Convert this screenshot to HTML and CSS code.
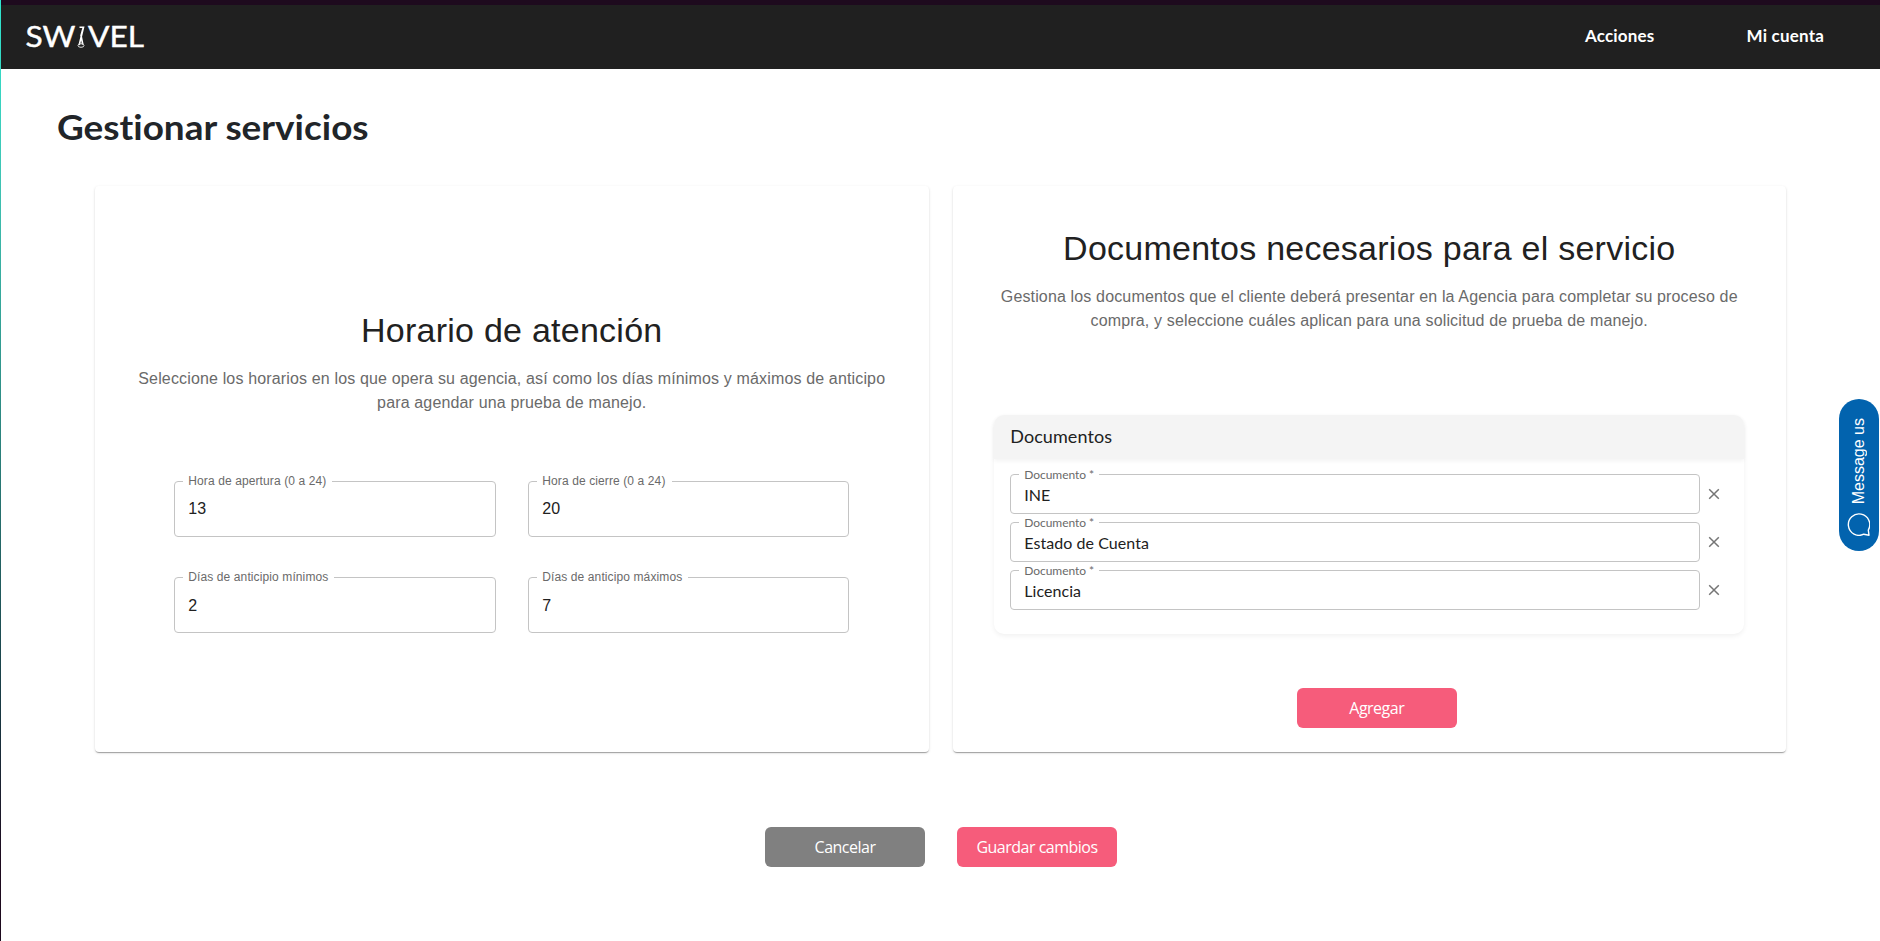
FILE: index.html
```html
<!DOCTYPE html>
<html lang="es">
<head>
<meta charset="utf-8">
<title>Gestionar servicios</title>
<link rel="stylesheet" href="styles.css">
</head>
<body>
<div class="edge"></div>
<header class="topbar">
  <svg class="logo" width="130" height="40" viewBox="0 0 130 40" role="img" aria-label="Swivel">
    <text class="logo-text" x="0.500" y="30" textLength="50" lengthAdjust="spacingAndGlyphs">SW</text>
    <path class="logo-stroke" d="M54.500 10.200h4L54.200 28M58.300 10.500L56 18.500L57.800 27.500"/>
    <ellipse class="logo-base" cx="56" cy="28.500" rx="3" ry="1.800"/>
    <text class="logo-text" x="63" y="30" textLength="56" lengthAdjust="spacingAndGlyphs">VEL</text>
  </svg>
  <nav class="nav"><a class="nav-link">Acciones</a><a class="nav-link">Mi cuenta</a></nav>
</header>
<main class="page">
  <h1 class="title">Gestionar servicios</h1>
  <div class="cards">
    <section class="card hours">
      <h2 class="card-title">Horario de atención</h2>
      <p class="card-text">Seleccione los horarios en los que opera su agencia, así como los días mínimos y máximos de anticipo<br>para agendar una prueba de manejo.</p>
      <div class="fields">
        <label class="field"><span class="label">Hora de apertura (0 a 24)</span><span class="value">13</span></label>
        <label class="field"><span class="label">Hora de cierre (0 a 24)</span><span class="value">20</span></label>
        <label class="field low"><span class="label">Días de anticipio mínimos</span><span class="value">2</span></label>
        <label class="field low"><span class="label">Días de anticipo máximos</span><span class="value">7</span></label>
      </div>
    </section>
    <section class="card docs">
      <h2 class="card-title">Documentos necesarios para el servicio</h2>
      <p class="card-text">Gestiona los documentos que el cliente deberá presentar en la Agencia para completar su proceso de<br>compra, y seleccione cuáles aplican para una solicitud de prueba de manejo.</p>
      <div class="panel">
        <h3 class="panel-head">Documentos</h3>
        <div class="panel-body">
          <div class="doc-row"><label class="field doc"><span class="label">Documento *</span><span class="value">INE</span></label><svg class="remove" viewBox="0 0 12 12"><path d="M1.200 1.200L10.800 10.800M10.800 1.200L1.200 10.800"/></svg></div>
          <div class="doc-row"><label class="field doc"><span class="label">Documento *</span><span class="value">Estado de Cuenta</span></label><svg class="remove" viewBox="0 0 12 12"><path d="M1.200 1.200L10.800 10.800M10.800 1.200L1.200 10.800"/></svg></div>
          <div class="doc-row"><label class="field doc"><span class="label">Documento *</span><span class="value">Licencia</span></label><svg class="remove" viewBox="0 0 12 12"><path d="M1.200 1.200L10.800 10.800M10.800 1.200L1.200 10.800"/></svg></div>
        </div>
      </div>
      <button class="btn primary">Agregar</button>
    </section>
  </div>
  <div class="actions">
    <button class="btn neutral">Cancelar</button>
    <button class="btn primary">Guardar cambios</button>
  </div>
</main>
<aside class="chat">
  <span class="chat-text">Message us</span>
  <svg class="chat-icon" viewBox="0 0 24 24"><path d="M23 23.200L22.300 18A10.700 10.700 0 1 0 17.800 22.200L23 23.200Z"/></svg>
</aside>
</body>
</html>
```

FILE: styles.css
```css
* { box-sizing: border-box; }
body {
  margin: 0;
  min-height: 941px;
  background: #fff;
  color: #212121;
  font-family: "Liberation Sans", Arial, sans-serif;
  overflow: hidden;
}
.edge {
  position: absolute;
  left: 0;
  top: 0;
  width: 1px;
  height: 941px;
  background: linear-gradient(#2fe6cf 0, #3fc4b4 180px, #34a397 320px, #266e6c 520px, #183540 720px, #1d0a1e 860px, #1d0a1e);
}
.topbar {
  display: flex;
  align-items: center;
  justify-content: space-between;
  height: 69px;
  padding: 0 56px 0 25px;
  border-top: 5px solid #1e0a1e;
  background: #202020;
}
.logo { display: block; }
.logo-text { fill: #fff; stroke: #fff; stroke-width: .4; font: 400 29px Lato, sans-serif; }
.logo-stroke { fill: none; stroke: #fff; stroke-width: 1.600; }
.logo-base { fill: none; stroke: #ddd; stroke-width: 1; }
.nav { display: flex; gap: 92px; padding-bottom: 2px; }
.nav-link { color: #fff; font: 700 17px/24px Lato, sans-serif; letter-spacing: .2px; }
.title {
  margin: 0 0 0 57px;
  padding: 39px 0 0;
  width: 300px;
  height: 117px;
  color: #212529;
  font: 700 34px/38px Lato, sans-serif;
  font-variant-ligatures: none;
  white-space: nowrap;
  transform: scaleX(1.086);
  transform-origin: left;
}
.cards {
  display: grid;
  grid-template-columns: 1fr 1fr;
  gap: 24px;
  width: 1691px;
  height: 566px;
  margin-left: 95px;
}
.card {
  display: flex;
  flex-direction: column;
  align-items: center;
  border-radius: 4px;
  background: #fff;
  box-shadow: 0 2px 1px -1px rgba(0,0,0,.2), 0 1px 1px rgba(0,0,0,.14), 0 1px 3px rgba(0,0,0,.12);
}
.hours { padding-top: 123px; }
.docs { padding-top: 41px; }
.card-title {
  margin: 0 0 16px;
  font-size: 34px;
  font-weight: 400;
  line-height: 42px;
  letter-spacing: .25px;
}
.card-text {
  margin: 0;
  color: #6a6a6a;
  font-size: 16px;
  line-height: 24px;
  letter-spacing: .15px;
  text-align: center;
  white-space: nowrap;
}
.fields {
  display: grid;
  grid-template-columns: 322px 321px;
  gap: 40px 32px;
  margin-top: 66px;
}
.field {
  position: relative;
  display: block;
  height: 56px;
  padding: 15px 13px;
  border: 1px solid #c4c4c4;
  border-radius: 4px;
  font-size: 16px;
}
.label {
  position: absolute;
  left: 8px;
  top: -8px;
  padding: 0 6px 0 5px;
  background: #fff;
  color: #6a6a6a;
  font-size: 12px;
  line-height: 14px;
  letter-spacing: .11px;
  white-space: nowrap;
}
.value { display: block; line-height: 23px; }
.low { padding-top: 16px; }
.panel {
  width: 750px;
  height: 219px;
  margin-top: 82px;
  border-radius: 10px;
  background: #fff;
  box-shadow: 0 2px 5px rgba(0,0,0,.06);
  font-family: Lato, sans-serif;
}
.panel-head {
  margin: 0;
  height: 44px;
  padding: 0 16px;
  border-radius: 10px 10px 0 0;
  background: #f4f4f4;
  box-shadow: 0 2px 4px rgba(0,0,0,.05);
  font-size: 18px;
  font-weight: 400;
  line-height: 43px;
  letter-spacing: .08px;
}
.panel-body { display: grid; gap: 8px; padding: 15px 16px; }
.doc-row { display: flex; align-items: center; gap: 8px; }
.doc { width: 690px; height: 40px; padding: 8px 13px; }
.doc .value { letter-spacing: .06px; }
.doc .label { top: -7px; padding-right: 5px; letter-spacing: -.04px; }
.remove { width: 12px; height: 12px; fill: none; stroke: #757575; stroke-width: 1.500; }
.btn {
  width: 160px;
  height: 40px;
  padding: 0;
  border: 0;
  border-radius: 6px;
  color: #fff;
  font: 400 16px "Open Sans", "Noto Sans", sans-serif;
  letter-spacing: -.5px;
}
.primary { background: #f65c7b; }
.neutral { background: #808080; }
.docs .btn { margin: 54px 0 0 15px; }
.actions { display: flex; gap: 32px; margin: 75px 0 0 765px; }
.chat {
  position: absolute;
  right: 1px;
  top: 399px;
  display: flex;
  flex-direction: column;
  align-items: center;
  gap: 8px;
  width: 40px;
  height: 152px;
  padding-top: 19px;
  border-radius: 20px;
  background: #0263ae;
  color: #fff;
}
.chat-text { writing-mode: vertical-rl; transform: rotate(180deg); font-size: 16px; line-height: 18px; }
.chat-icon { width: 24px; height: 24px; margin-right: 2px; fill: none; stroke: #fff; stroke-width: 1.400; stroke-linejoin: round; }
```
